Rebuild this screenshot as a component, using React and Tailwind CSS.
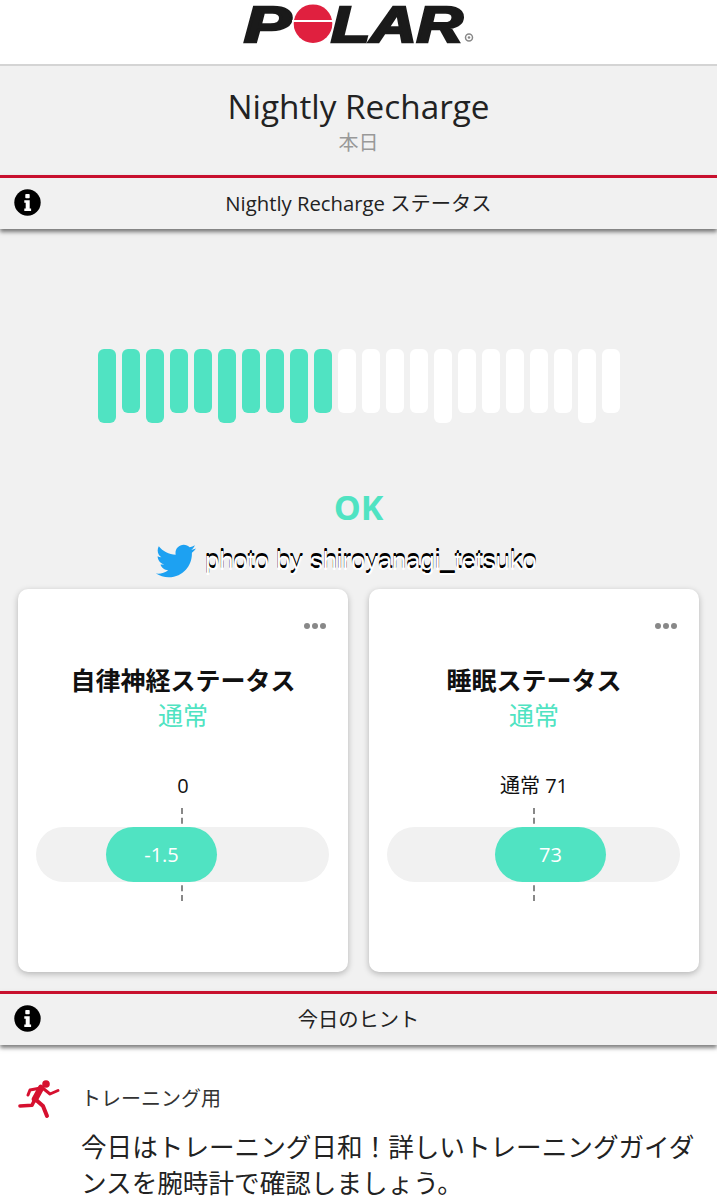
import React from "react";
import { FaTwitter } from "react-icons/fa";

const FONT = "font-['Open_Sans','Noto_Sans_CJK_JP',sans-serif]";
const bars = [1, 0, 1, 0, 0, 1, 0, 0, 1, 0, 0, 0, 0, 0, 1, 0, 0, 0, 0, 0, 1, 0];

function Logo() {
  return (
    <svg width="236" height="46" viewBox="0 0 236 46" className="block">
      <text
        x="2"
        y="39"
        fontFamily="Liberation Sans"
        fontWeight="700"
        fontStyle="italic"
        fontSize="50"
        textLength="47"
        lengthAdjust="spacingAndGlyphs"
        stroke="#1a1a1a"
        strokeWidth="2.5"
        fill="#1a1a1a"
      >
        P
      </text>
      <circle cx="71" cy="20.7" r="19.3" fill="#e0203f" />
      <rect x="50" y="17" width="42" height="2" fill="#fff" />
      <text
        x="89"
        y="39"
        fontFamily="Liberation Sans"
        fontWeight="700"
        fontStyle="italic"
        fontSize="50"
        textLength="132"
        lengthAdjust="spacingAndGlyphs"
        stroke="#1a1a1a"
        strokeWidth="2.5"
        fill="#1a1a1a"
      >
        LAR
      </text>
      <circle cx="227" cy="34.5" r="3.5" fill="none" stroke="#888" strokeWidth="1.5" />
      <circle cx="227" cy="34.5" r="1.3" fill="#888" />
    </svg>
  );
}

function InfoIcon() {
  return (
    <svg width="27" height="27" viewBox="0 0 27 27" className="absolute left-[14px] top-[11px]">
      <circle cx="13.5" cy="13.5" r="13.2" fill="#000" />
      <rect x="11.3" y="5" width="4.4" height="4.2" rx="0.8" fill="#fff" />
      <path d="M10.3 11.2h5.4v8.2h1.4v2.5h-6.8v-2.5h1.4v-5.7h-1.4z" fill="#fff" />
    </svg>
  );
}

function RunnerIcon() {
  return (
    <svg width="42" height="40" viewBox="0 0 42 40" fill="none" stroke="#d6102f" strokeLinecap="round" strokeLinejoin="round">
      <circle cx="28" cy="5" r="3.8" fill="#d6102f" stroke="none" />
      <path d="M24 8.5l8 6.5 8-3.5" strokeWidth="3" />
      <path d="M20 9.5l-8 1.5-2 5" strokeWidth="3" />
      <path d="M23 9l-6 11" strokeWidth="6.5" />
      <path d="M17 20l-3 6.2L2 27" strokeWidth="3.6" />
      <path d="M17 20l8 7 4 10" strokeWidth="4" />
    </svg>
  );
}

function SectionBar({ title }) {
  return (
    <div className="relative z-10 border-t-[3px] border-[#c8102e] bg-[#f1f1f1] shadow-[0_3px_4px_rgba(0,0,0,0.5)] h-[54px] flex items-center justify-center">
      <InfoIcon />
      <span className="text-[20.3px] text-[#222]">{title}</span>
    </div>
  );
}

function StatusCard({ title, label, value, offset, lineLeft }) {
  return (
    <div className="relative w-[330px] h-[383px] bg-white rounded-[10px] shadow-[0_2px_6px_rgba(0,0,0,0.25)] flex flex-col items-center">
      <div className="absolute right-[22px] top-[34px] flex gap-[2px]">
        <span className="w-[6px] h-[6px] rounded-full bg-[#888]"></span>
        <span className="w-[6px] h-[6px] rounded-full bg-[#888]"></span>
        <span className="w-[6px] h-[6px] rounded-full bg-[#888]"></span>
      </div>
      <div className="mt-[73px] text-[25px] leading-[36px] font-bold text-[#111]">{title}</div>
      <div className="-mt-[1px] text-[25px] leading-[36px] text-[#50e3c2]">通常</div>
      <div className="mt-[39px] text-[20px] leading-[28px] text-[#111]">{label}</div>
      <div className="relative self-start ml-[18px] mt-[27px] w-[293px] h-[55px] rounded-full bg-[#f1f1f1]">
        <div
          className="absolute top-[-19px] h-[93px] border-l-2 border-dashed border-[#888]"
          style={{ left: lineLeft }}
        ></div>
        <div
          className="absolute top-0 w-[111px] h-[55px] rounded-full bg-[#50e3c2] text-white text-[20px] flex items-center justify-center"
          style={{ left: offset }}
        >
          {value}
        </div>
      </div>
    </div>
  );
}

export default function App() {
  return (
    <div className={`h-[1200px] overflow-hidden bg-white ${FONT}`}>
      <header className="h-[66px] bg-white border-b-2 border-[#d4d4d4] flex items-start justify-center pl-[2px] pt-[3px]">
        <Logo />
      </header>

      <div className="h-[109px] bg-[#f1f1f1] flex flex-col items-center pt-[19px]">
        <h1 className="text-[33.3px] leading-[42px] text-[#222]">Nightly Recharge</h1>
        <div className="text-[20px] leading-[28px] mt-[2px] text-[#999]">本日</div>
      </div>

      <SectionBar title="Nightly Recharge ステータス" />

      <main className="h-[762px] bg-[#f1f1f1] flex flex-col">
        <div className="mt-[120px] ml-[98px] flex gap-[6px] items-start">
          {bars.map((tall, i) => (
            <div
              key={i}
              className={`w-[18px] rounded-[6px] ${tall ? "h-[74px]" : "h-[64px]"} ${
                i < 10 ? "bg-[#50e3c2]" : "bg-white"
              }`}
            ></div>
          ))}
        </div>

        <div className="mt-[62px] text-center text-[34px] leading-[44px] font-bold text-[#50e3c2]">OK</div>

        <div className="mt-[13px] h-[38px] ml-[156px] flex items-center gap-[9px]">
          <FaTwitter className="text-[40px] text-[#1da1f2]" />
          <span className="font-['Liberation_Sans',sans-serif] text-[25.5px] text-white [text-shadow:0_-2px_0_#000,0_-3px_0_#000]">
            photo by shiroyanagi_tetsuko
          </span>
        </div>

        <div className="mt-[9px] px-[18px] flex justify-between">
          <StatusCard title="自律神経ステータス" label="0" value="-1.5" offset={70} lineLeft={145} />
          <StatusCard title="睡眠ステータス" label="通常 71" value="73" offset={108} lineLeft={146} />
        </div>
      </main>

      <SectionBar title="今日のヒント" />

      <section className="bg-white pl-[18px] pr-[20px] pt-[34px]">
        <div className="flex items-center gap-[21px]">
          <RunnerIcon />
          <span className="text-[20px] text-[#333]">トレーニング用</span>
        </div>
        <p className="ml-[63px] mt-[11px] text-[25.6px] leading-[36px] text-[#222]">
          今日はトレーニング日和！詳しいトレーニングガイダンスを腕時計で確認しましょう。
        </p>
      </section>
    </div>
  );
}
